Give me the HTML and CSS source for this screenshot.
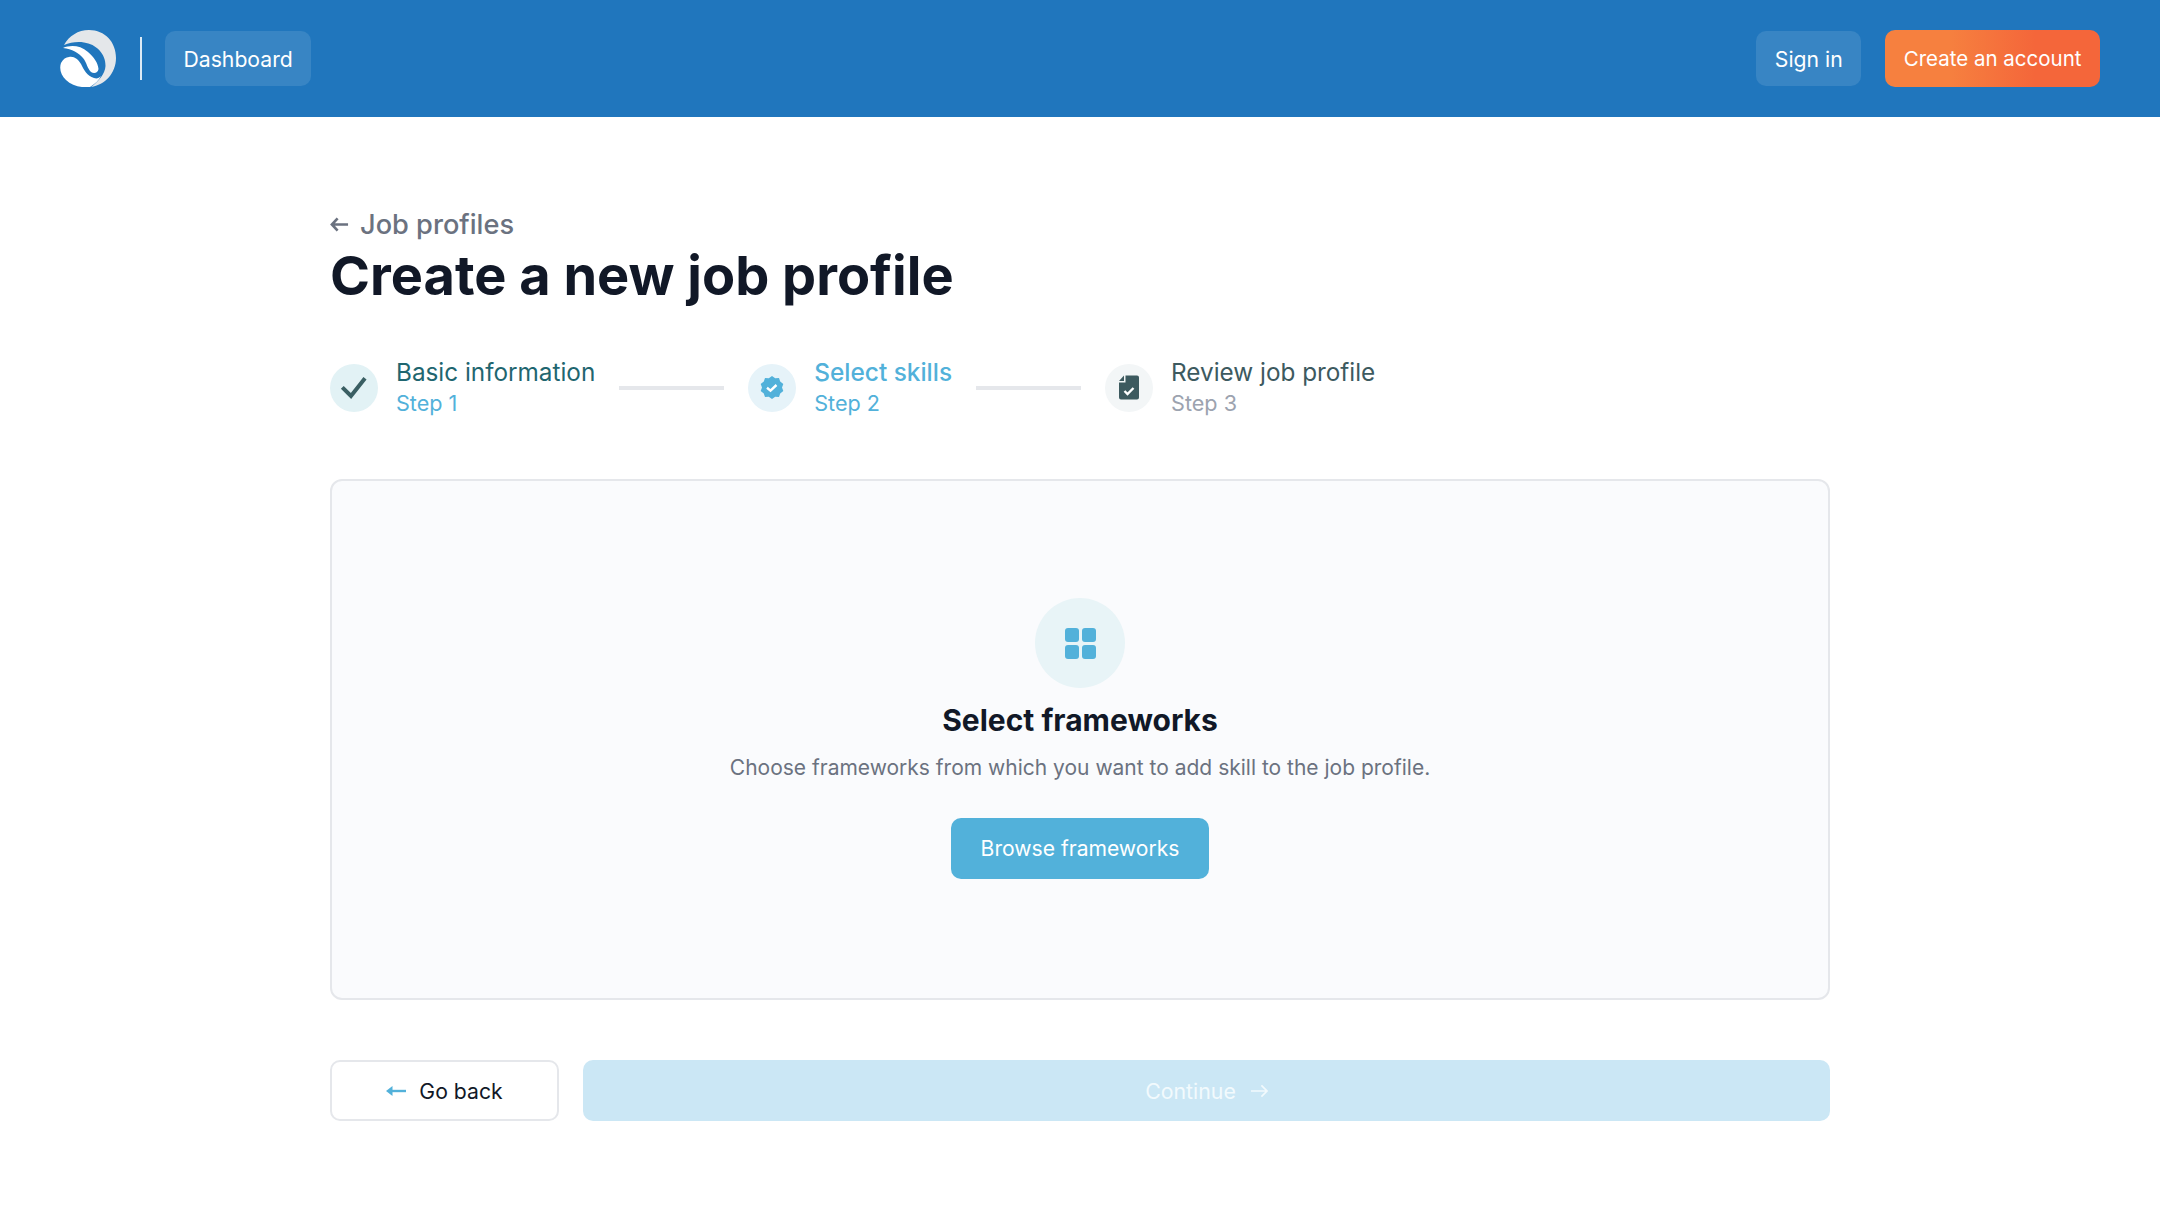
FILE: index.html
```html
<!DOCTYPE html>
<html lang="en">
<head>
  <meta charset="UTF-8">
  <meta name="viewport" content="width=device-width, initial-scale=1.0">
  <title>Create a new job profile</title>
  <link rel="stylesheet" href="styles.css">
</head>
<body>
  <header class="topbar">
    <div class="topbar-left">
      <svg class="logo" viewBox="0 0 56 57" aria-hidden="true">
        <path fill="#e4e7ea" d="M4 15C9 6 18 0 29 0C45 0 56 12 56 28C56 43 45 55 31 57C39 51 45 44 45.500 36C46 24 36 14 24 12.500C17 11.500 10 12.500 4 15Z"/>
        <path fill="#fff" d="M3 18C10 15 20 15 28 22C34 27 38 33 38.500 39C38 43 34 44 31 42C27 38 27 33 23 28C19 23 12 19 3 18Z"/>
        <path fill="#fff" d="M9 27C14 26 18 29 21 34C24 40 27 46 34 48C37 49 39 48 41 46C39 50 35 54 30 57C22 58 12 56 6 50C1 45 -1 39 1 33C3 29 6 27 9 27Z"/>
      </svg>
      <span class="divider"></span>
      <a href="#" class="nav-btn">Dashboard</a>
    </div>
    <div class="topbar-right">
      <a href="#" class="nav-btn">Sign in</a>
      <a href="#" class="signup-btn">Create an account</a>
    </div>
  </header>

  <main class="page">
    <a href="#" class="back-link">
      <svg class="back-arrow" viewBox="0 0 20 20" aria-hidden="true"><path d="M8 3.500L2 10l6 6.500M2.500 10H19"/></svg>
      Job profiles
    </a>
    <h1>Create a new job profile</h1>

    <!-- stepper -->
    <ol class="steps">
      <li class="step done">
        <span class="step-icon">
          <svg viewBox="0 0 32 32" aria-hidden="true"><path class="tick" d="M4.300 15.300L13 24 27 6.300"/></svg>
        </span>
        <div class="step-text">
          <div class="step-name">Basic information</div>
          <div class="step-num">Step 1</div>
        </div>
      </li>
      <li class="step-line"></li>
      <li class="step active">
        <span class="step-icon">
          <svg viewBox="0 0 24 24" aria-hidden="true">
            <path fill="#52b1da" d="M12 0l3.200 2.200 3.800-.3 1.200 3.700 3.100 2.300L22 11.500l1.300 3.600-3.100 2.300-1.200 3.600-3.800-.2L12 23l-3.200-2.200-3.800.2-1.200-3.600L.7 15.100 2 11.500.7 7.900l3.100-2.300L5 1.900l3.800.3z"/>
            <path class="badge-tick" d="M7 11.800l3.500 2.800 6-5.600"/>
          </svg>
        </span>
        <div class="step-text">
          <div class="step-name">Select skills</div>
          <div class="step-num">Step 2</div>
        </div>
      </li>
      <li class="step-line"></li>
      <li class="step todo">
        <span class="step-icon">
          <svg viewBox="0 0 20 24" aria-hidden="true">
            <path fill="#3d5a5f" d="M6.500 0H18a2 2 0 0 1 2 2v20a2 2 0 0 1-2 2H2a2 2 0 0 1-2-2V7h6.500z"/>
            <path fill="#3d5a5f" d="M0 5.500L5 0v5.500z"/>
            <path class="badge-tick" d="M5.500 15.500l3 3 6-6"/>
          </svg>
        </span>
        <div class="step-text">
          <div class="step-name">Review job profile</div>
          <div class="step-num">Step 3</div>
        </div>
      </li>
    </ol>

    <section class="empty-card">
      <span class="empty-icon">
        <svg viewBox="0 0 31 31" aria-hidden="true">
          <rect x="0" y="0" width="14" height="14" rx="3"/>
          <rect x="17" y="0" width="14" height="14" rx="3"/>
          <rect x="0" y="17" width="14" height="14" rx="3"/>
          <rect x="17" y="17" width="14" height="14" rx="3"/>
        </svg>
      </span>
      <h2>Select frameworks</h2>
      <p>Choose frameworks from which you want to add skill to the job profile.</p>
      <a href="#" class="browse-btn">Browse frameworks</a>
    </section>

    <div class="actions">
      <a href="#" class="go-back">
        <svg class="go-back-arrow" viewBox="0 0 20 12" aria-hidden="true"><path class="arrow-head" d="M0 6l6.500-5v10z"/><path class="arrow-tail" d="M5 6h15"/></svg>
        Go back
      </a>
      <a href="#" class="continue">
        Continue
        <svg class="continue-arrow" viewBox="0 0 18 14" aria-hidden="true"><path d="M11 1l6 6-6 6M0 7h16.500"/></svg>
      </a>
    </div>
  </main>
</body>
</html>
```

FILE: styles.css
```css
/* Basic Reset */
* {
  margin: 0;
  padding: 0;
  box-sizing: border-box;
}
body {
  font-family: Inter, "Liberation Sans", sans-serif;
  background: #fff;
  color: #111827;
}
a {
  text-decoration: none;
}

/* Top bar */
.topbar {
  height: 117px;
  background: #2076bd;
  padding: 0 60px;
  display: flex;
  justify-content: space-between;
  align-items: center;
}
.topbar-left,
.topbar-right {
  display: flex;
  align-items: center;
}
.logo {
  width: 56px;
  height: 57px;
}
.divider {
  width: 2px;
  height: 43px;
  background: #dceaf5;
  margin: 0 23px 0 24px;
}
.nav-btn {
  height: 55px;
  padding: 0 18.500px;
  display: flex;
  align-items: center;
  border-radius: 10px;
  background: #3885c4;
  color: #fff;
  font-size: 21.200px;
}
.signup-btn {
  height: 57px;
  padding: 0 18.500px;
  margin-left: 24px;
  display: flex;
  align-items: center;
  border-radius: 10px;
  background: linear-gradient(90deg, #f6803f 30%, #f4663a 70%);
  color: #fff;
  font-size: 20.500px;
}

/* Page */
.page {
  width: 1500px;
  margin: 0 auto;
  padding-top: 88px;
}
.back-link {
  display: flex;
  align-items: center;
  gap: 11px;
  height: 38px;
  color: #6b7280;
  font-size: 27.200px;
  font-weight: 500;
}
.back-arrow {
  width: 19px;
  height: 19px;
  fill: none;
  stroke: #6b7280;
  stroke-width: 2.800;
}
h1 {
  font-size: 54.100px;
  line-height: 66px;
  font-weight: 700;
  color: #111827;
}

/* Stepper */
.steps {
  list-style: none;
  display: flex;
  align-items: center;
  margin-top: 47px;
}
.step {
  display: flex;
  align-items: center;
  gap: 18px;
}
.step-icon {
  width: 48px;
  height: 48px;
  border-radius: 50%;
  display: flex;
  align-items: center;
  justify-content: center;
}
.step-text {
  line-height: 1;
}
.step-name {
  font-size: 24.300px;
  line-height: 32px;
}
.step-num {
  font-size: 21.600px;
  line-height: 31px;
  color: #52b1da;
}
.step-line {
  width: 105px;
  height: 4px;
  background: #e5e7eb;
  margin: 1px 24px 0;
}
.done .step-icon {
  background: #e2f2f5;
}
.done .step-icon svg {
  width: 32px;
  height: 32px;
}
.done .step-name {
  color: #1f6670;
}
.tick {
  fill: none;
  stroke: #3a5f63;
  stroke-width: 4;
}
.active .step-icon {
  background: #e6f3f9;
}
.active .step-icon svg {
  width: 24px;
  height: 24px;
}
.active .step-name {
  color: #52b1da;
  font-size: 24.400px;
  font-weight: 500;
}
.badge-tick {
  fill: none;
  stroke: #fff;
  stroke-width: 2.400;
}
.todo .step-icon {
  background: #f3f6f7;
}
.todo .step-icon svg {
  width: 20px;
  height: 25px;
}
.todo .step-name {
  color: #3d5a5f;
}
.todo .step-num {
  color: #9ca3af;
}

/* Empty state card */
.empty-card {
  margin-top: 60px;
  height: 521px;
  border: 2px solid #e5e7eb;
  border-radius: 12px;
  background: #fafbfd;
  display: flex;
  flex-direction: column;
  align-items: center;
  padding-top: 117px;
}
.empty-icon {
  width: 90px;
  height: 90px;
  border-radius: 50%;
  background: #e8f4f7;
  display: flex;
  align-items: center;
  justify-content: center;
}
.empty-icon svg {
  width: 31px;
  height: 31px;
  fill: #52b1da;
}
.empty-card h2 {
  margin-top: 12px;
  font-size: 30px;
  line-height: 40px;
  font-weight: 700;
}
.empty-card p {
  margin-top: 12px;
  font-size: 21px;
  line-height: 32px;
  color: #6b7280;
}
.browse-btn {
  margin-top: 34px;
  height: 61px;
  padding: 0 30px;
  display: flex;
  align-items: center;
  border-radius: 10px;
  background: #52b1da;
  color: #fff;
  font-size: 21.100px;
}

/* Footer actions */
.actions {
  display: flex;
  gap: 24px;
  margin-top: 60px;
}
.go-back {
  width: 229px;
  height: 61px;
  border: 2px solid #e5e7eb;
  border-radius: 10px;
  display: flex;
  align-items: center;
  justify-content: center;
  gap: 13px;
  color: #111827;
  font-size: 21.200px;
}
.go-back-arrow {
  width: 20px;
  height: 12px;
}
.arrow-head {
  fill: #52b1da;
}
.arrow-tail {
  fill: none;
  stroke: #52b1da;
  stroke-width: 2.400;
}
.continue {
  flex: 1;
  height: 61px;
  border-radius: 10px;
  background: #cbe7f5;
  display: flex;
  align-items: center;
  justify-content: center;
  gap: 15px;
  color: #f2fafd;
  font-size: 21.300px;
}
.continue-arrow {
  width: 17px;
  height: 14px;
  fill: none;
  stroke: #f2fafd;
  stroke-width: 1.800;
}
```
